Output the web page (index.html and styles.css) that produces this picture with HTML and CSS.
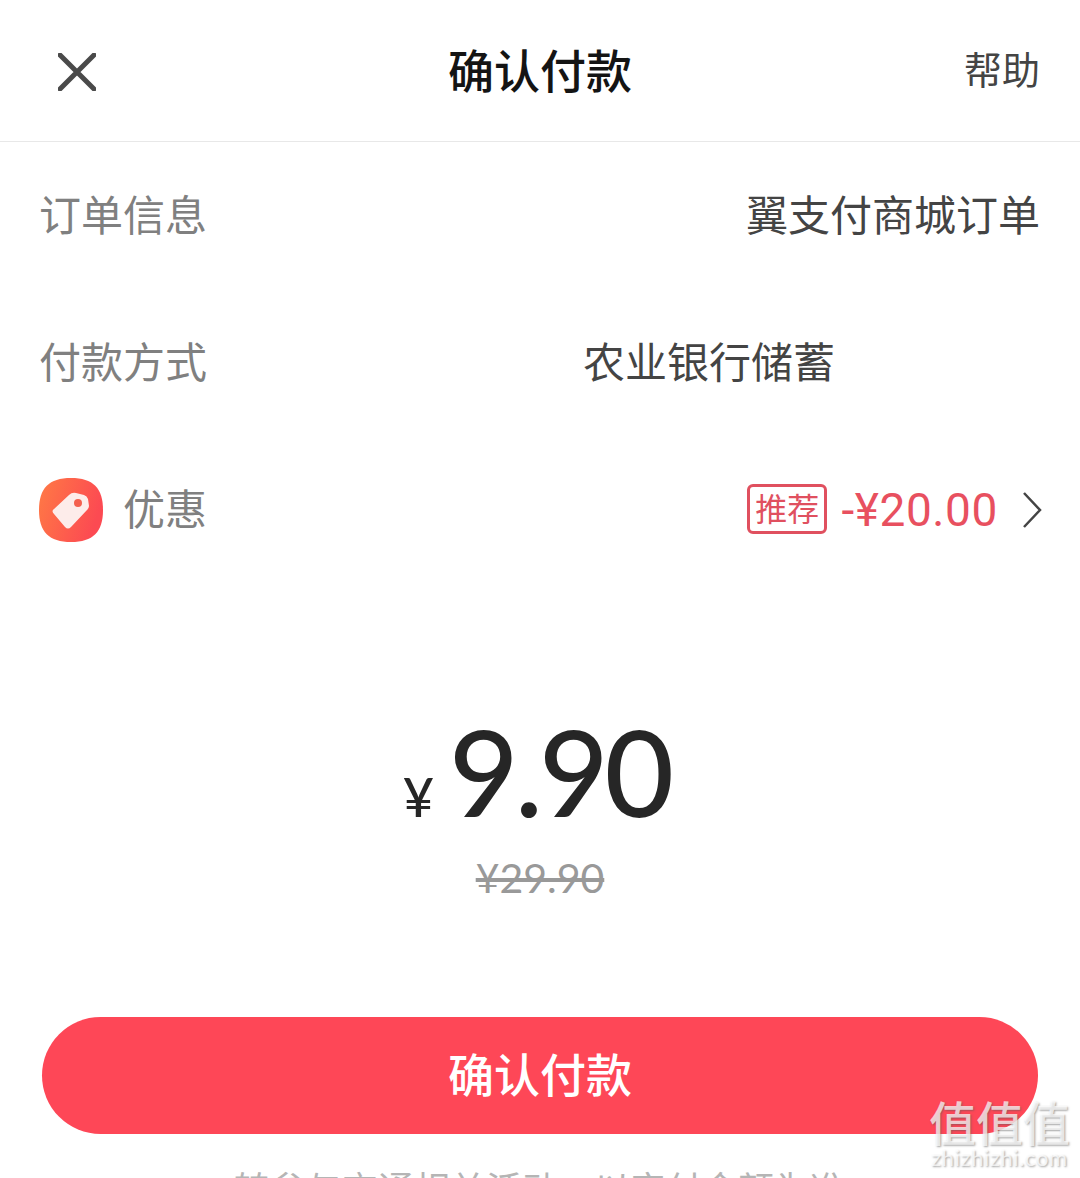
FILE: index.html
```html
<!DOCTYPE html>
<html lang="zh-CN">
<head>
<meta charset="utf-8">
<title>确认付款</title>
<link rel="stylesheet" href="styles.css">
</head>
<body>
<main class="page">
  <header class="header">
    <svg class="close" viewBox="0 0 38 38" width="38" height="38" aria-hidden="true"><path d="M2 2 L36 36 M36 2 L2 36"/></svg>
    <h1 class="title">确认付款</h1>
    <span class="help">帮助</span>
  </header>
  <section class="row">
    <span class="label">订单信息</span>
    <span class="value">翼支付商城订单</span>
  </section>
  <section class="row">
    <span class="label">付款方式</span>
    <span class="value value-pay">农业银行储蓄</span>
  </section>
  <section class="row">
    <svg class="badge" viewBox="0 0 64 64" width="64" height="64" aria-hidden="true">
      <defs><linearGradient id="bg" x1="0" y1="0" x2="1" y2="0.3"><stop offset="0" stop-color="#ff7a45"/><stop offset="1" stop-color="#fc4a52"/></linearGradient></defs>
      <path d="M32 0 C54 0 64 10 64 32 C64 54 54 64 32 64 C10 64 0 54 0 32 C0 10 10 0 32 0Z" fill="url(#bg)"/>
      <path d="M15 31 L30 17 Q33 14 37 15 L45 17 Q48 18 49 21 L50 28 Q50 30 48 32 L32 49 Q29 52 26 49 L15 36 Q12 33 15 31Z" fill="#fdecea"/>
      <circle cx="39" cy="25" r="4" fill="#f4604f"/>
    </svg>
    <span class="label label-promo">优惠</span>
    <span class="tag"><span class="tag-text">推荐</span></span>
    <span class="discount">-¥20.00</span>
    <svg class="chevron" viewBox="0 0 20 38" width="20" height="38" aria-hidden="true"><path d="M2 2 L18 19 L2 36"/></svg>
  </section>
  <section class="amount">
    <p class="price"><span class="currency">¥</span><span class="number">9.90</span></p>
    <p class="original">¥29.90</p>
  </section>
  <button class="pay" type="button"><span class="pay-text">确认付款</span></button>
  <p class="note">转参与交通相关活动，以实付金额为准</p>
  <div class="watermark"><span class="wm-mark">值值值</span><span class="wm-url">zhizhizhi.com</span></div>
</main>
</body>
</html>
```
FILE: styles.css
```css
* { box-sizing: border-box; }
html, body { margin: 0; padding: 0; background: #fff; }
body { width: 1080px; height: 1178px; overflow: hidden; font-family: "Noto Sans CJK SC", "Liberation Sans", sans-serif; }
.page { position: relative; display: flex; flex-direction: column; width: 1080px; height: 1178px; overflow: hidden; }
.header { display: grid; grid-template-columns: 1fr auto 1fr; align-items: center; height: 142px; padding: 0 40px 0 40px; border-bottom: 1px solid #e8e8e8; flex: none; }
.close { fill: none; stroke: #4a4a4a; stroke-width: 5; stroke-linecap: round; margin: 3px 0 0 18px; }
.title { margin: 0 0 6px; font-size: 46px; font-weight: 500; line-height: 60px; color: #141414; }
.help { justify-self: end; font-size: 38px; line-height: 50px; color: #444; margin-top: -6px; }
.row { display: flex; align-items: center; height: 147px; padding: 0 40px; flex: none; }
.label { font-size: 42px; line-height: 56px; color: #808080; margin: -6px 0 0 -1px; }
.value { margin: -6px 0 0 auto; font-size: 42px; line-height: 56px; color: #444; }
.value-pay { margin-right: 205px; }
.badge { margin-left: -1px; flex: none; }
.label-promo { margin-left: 20px; }
.tag { display: flex; align-items: center; justify-content: center; margin: -2px 0 0 auto; width: 80px; height: 50px; border: 3px solid #e0505f; border-radius: 6px; color: #e0505f; }
.tag-text { font-size: 32px; line-height: 40px; margin-top: -4px; }
.discount { margin-left: 14px; font-family: Roboto, "Liberation Sans", sans-serif; font-size: 46px; line-height: 56px; letter-spacing: .6px; color: #e8505f; }
.chevron { margin-left: 24px; margin-right: -2px; fill: none; stroke: #444; stroke-width: 2.5; flex: none; }
.amount { display: flex; flex-direction: column; align-items: center; margin-top: 114px; flex: none; }
.price { display: flex; align-items: baseline; margin: 0; padding-right: 7px; height: 154px; color: #262626; }
.currency { font-family: Lato, sans-serif; font-size: 54px; font-weight: 500; margin-right: 15px; }
.number { font-family: Lato, sans-serif; font-size: 120px; font-weight: 500; line-height: 148px; letter-spacing: -4px; }
.original { margin: 2px 0 0; font-family: Lato, sans-serif; font-size: 41px; line-height: 50px; color: #999; text-decoration: line-through; }
.pay { display: block; align-self: center; margin-top: 114px; width: 996px; height: 117px; border: 0; border-radius: 59px; background: #fe4757; color: #fff; font: 500 46px/60px "Noto Sans CJK SC", sans-serif; flex: none; }
.pay-text { position: relative; top: -4px; }
.note { margin: 29px 0 0; text-align: center; font-size: 36px; line-height: 48px; color: #b5b5b5; flex: none; }
.watermark { position: absolute; right: 10px; bottom: 9px; display: flex; flex-direction: column; align-items: center; color: rgba(255,255,255,.72); text-shadow: 1px 1px 2px rgba(90,90,90,.55); }
.wm-mark { font-size: 47px; line-height: 52px; font-weight: 500; }
.wm-url { font-family: Lato, sans-serif; font-size: 22px; line-height: 22px; letter-spacing: .6px; }
```
